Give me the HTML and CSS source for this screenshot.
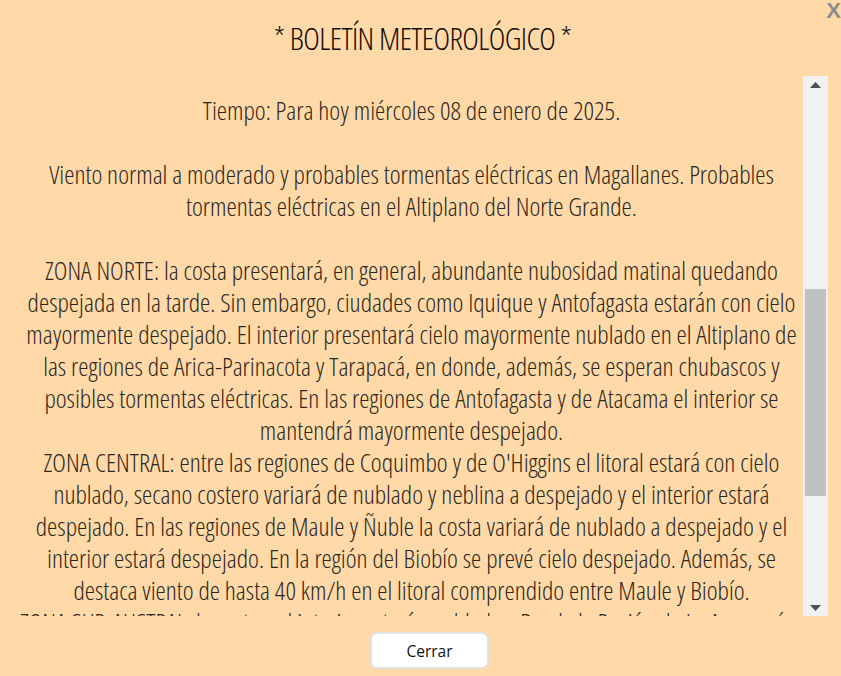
FILE: index.html
```html
<!DOCTYPE html>
<html lang="es">
<head>
<meta charset="utf-8">
<title>Boletín meteorológico</title>
<link rel="stylesheet" href="styles.css">
</head>
<body>
<div class="close">X</div>
<h1 class="title">* BOLETÍN METEOROLÓGICO *</h1>
<div class="main">
  <div class="scroll">
    <div class="text">
      <p>Tiempo: Para hoy miércoles 08 de enero de 2025.</p>
      <p>Viento normal a moderado y probables tormentas eléctricas en Magallanes. Probables<br>tormentas eléctricas en el Altiplano del Norte Grande.</p>
      <p class="tight">ZONA NORTE: la costa presentará, en general, abundante nubosidad matinal quedando<br>despejada en la tarde. Sin embargo, ciudades como Iquique y Antofagasta estarán con cielo<br>mayormente despejado. El interior presentará cielo mayormente nublado en el Altiplano de<br>las regiones de Arica-Parinacota y Tarapacá, en donde, además, se esperan chubascos y<br>posibles tormentas eléctricas. En las regiones de Antofagasta y de Atacama el interior se<br>mantendrá mayormente despejado.</p>
      <p class="tight">ZONA CENTRAL: entre las regiones de Coquimbo y de O'Higgins el litoral estará con cielo<br>nublado, secano costero variará de nublado y neblina a despejado y el interior estará<br>despejado. En las regiones de Maule y Ñuble la costa variará de nublado a despejado y el<br>interior estará despejado. En la región del Biobío se prevé cielo despejado. Además, se<br>destaca viento de hasta 40 km/h en el litoral comprendido entre Maule y Biobío.</p>
      <p class="tight">ZONA SUR-AUSTRAL: la costa y el interior estarán nublados. Desde la Región de La Araucanía a<br>Los Lagos variará de nublado a parcial.</p>
    </div>
  </div>
  <div class="scrollbar">
    <div class="sb-btn">
      <svg width="11" height="6" viewBox="0 0 11 6"><polygon points="5.5,0 11,6 0,6" fill="#505050"/></svg>
    </div>
    <div class="sb-track"><div class="sb-thumb"></div></div>
    <div class="sb-btn">
      <svg width="11" height="6" viewBox="0 0 11 6"><polygon points="0,0 11,0 5.5,6" fill="#505050"/></svg>
    </div>
  </div>
</div>
<div class="footer">
  <button class="btn">Cerrar</button>
</div>
</body>
</html>
```
FILE: styles.css
```css
html, body {
  margin: 0;
  padding: 0;
}
body {
  background: #ffdaa8;
  height: 676px;
  overflow: hidden;
  display: flex;
  flex-direction: column;
  position: relative;
  font-family: "Open Sans", "Noto Sans", sans-serif;
  font-stretch: 75%;
  font-weight: 300;
}
.close {
  position: absolute;
  top: 0;
  right: 0;
  font-family: "Liberation Sans", Arial, sans-serif;
  font-stretch: 100%;
  font-weight: bold;
  font-size: 22px;
  line-height: 22px;
  color: #8c8c8c;
}
.title {
  margin: 0;
  padding-top: 18px;
  padding-left: 4px;
  height: 40px;
  margin-bottom: 18px;
  font-weight: 300;
  font-size: 31.5px;
  letter-spacing: -0.6px;
  line-height: 40px;
  text-align: center;
  color: #140c06;
}
.main {
  display: flex;
  height: 540px;
  padding-right: 13px;
}
.scroll {
  flex: 1;
  overflow: hidden;
  padding-left: 20px;
  padding-top: 18px;
}
.text {
  text-align: center;
  font-size: 25.9px;
  line-height: 32px;
  color: #2f261c;
  white-space: nowrap;
}
.text p {
  margin: 0 0 32px;
}
.text p.tight {
  margin: 0;
}
.scrollbar {
  width: 25px;
  background: #f1f1f1;
  display: flex;
  flex-direction: column;
}
.sb-btn {
  height: 17px;
  display: flex;
  align-items: center;
  justify-content: center;
}
.sb-btn svg {
  display: block;
}
.sb-track {
  flex: 1;
}
.sb-thumb {
  margin: 196px 2px 0;
  height: 207px;
  background: #c1c1c1;
}
.footer {
  flex: 1;
  display: flex;
  justify-content: center;
  align-items: flex-start;
  padding-top: 16px;
  padding-left: 18px;
}
.btn {
  width: 119px;
  height: 37px;
  background: #fff;
  border: 2px solid #e2e2e2;
  border-radius: 7px;
  font-family: "Open Sans", Lato, sans-serif;
  font-stretch: 100%;
  font-weight: 400;
  font-size: 15.5px;
  color: #111;
  padding: 0;
}
```
